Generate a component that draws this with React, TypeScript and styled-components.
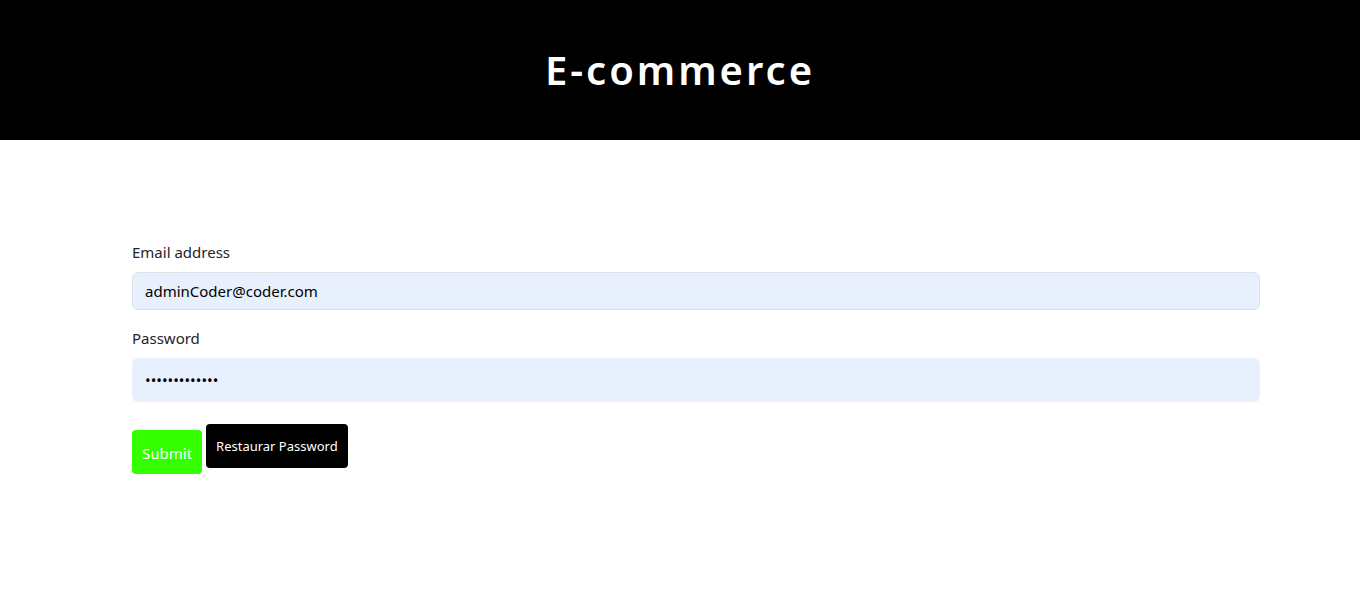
import React, { useState } from "react";
import styled, { createGlobalStyle } from "styled-components";

const GlobalStyle = createGlobalStyle`
  * { box-sizing: border-box; }
  body {
    margin: 0;
    background: #fff;
    font-family: "Segoe UI", "Noto Sans", "Open Sans", sans-serif;
    color: #212529;
  }
`;

const Header = styled.header`
  height: 140px;
  background: #000;
  display: flex;
  align-items: center;
  justify-content: center;
`;

const Title = styled.h1`
  margin: 0;
  color: #fff;
  font-size: 40px;
  font-weight: 600;
  letter-spacing: 3px;
  line-height: 1;
`;

const Main = styled.main`
  padding: 100px 100px 0 132px;
`;

const Form = styled.form`
  display: flex;
  flex-direction: column;
`;

const Group = styled.div`
  display: flex;
  flex-direction: column;
  margin-bottom: 16px;
`;

const Label = styled.label`
  font-size: 15px;
  line-height: 24px;
  margin-bottom: 8px;
`;

const Input = styled.input<{ $tall?: boolean; $bordered?: boolean }>`
  height: ${(p) => (p.$tall ? 44 : 38)}px;
  padding: 0 12px;
  font-family: inherit;
  font-size: 15px;
  color: #000;
  background: #e8f0fe;
  border: 1px solid ${(p) => (p.$bordered ? "#dee2e6" : "#e8f0fe")};
  border-radius: 6px;
  outline: none;
`;

const Actions = styled.div`
  display: flex;
  align-items: flex-start;
  gap: 4px;
  margin-top: 6px;
`;

const Button = styled.button<{ $variant: "green" | "black" }>`
  height: 44px;
  border: none;
  border-radius: 4px;
  color: #fff;
  font-family: inherit;
  cursor: pointer;
  background: ${(p) => (p.$variant === "green" ? "#33ff00" : "#000")};
  font-size: ${(p) => (p.$variant === "green" ? "15px" : "13px")};
  padding: 0 10px;
  margin-top: ${(p) => (p.$variant === "green" ? "6px" : "0")};
  padding-top: ${(p) => (p.$variant === "green" ? "2px" : "0")};
`;

const App: React.FC = () => {
  const [email, setEmail] = useState("adminCoder@coder.com");
  const [password, setPassword] = useState("adminCod3r123");

  return (
    <>
      <GlobalStyle />
      <Header>
        <Title>E-commerce</Title>
      </Header>
      <Main>
        <Form onSubmit={(e) => e.preventDefault()}>
          <Group>
            <Label htmlFor="email">Email address</Label>
            <Input
              id="email"
              type="email"
              $bordered
              value={email}
              onChange={(e) => setEmail(e.target.value)}
            />
          </Group>
          <Group>
            <Label htmlFor="password">Password</Label>
            <Input
              id="password"
              type="password"
              $tall
              value={password}
              onChange={(e) => setPassword(e.target.value)}
            />
          </Group>
          <Actions>
            <Button type="submit" $variant="green">
              Submit
            </Button>
            <Button type="button" $variant="black">
              Restaurar Password
            </Button>
          </Actions>
        </Form>
      </Main>
    </>
  );
};

export default App;
